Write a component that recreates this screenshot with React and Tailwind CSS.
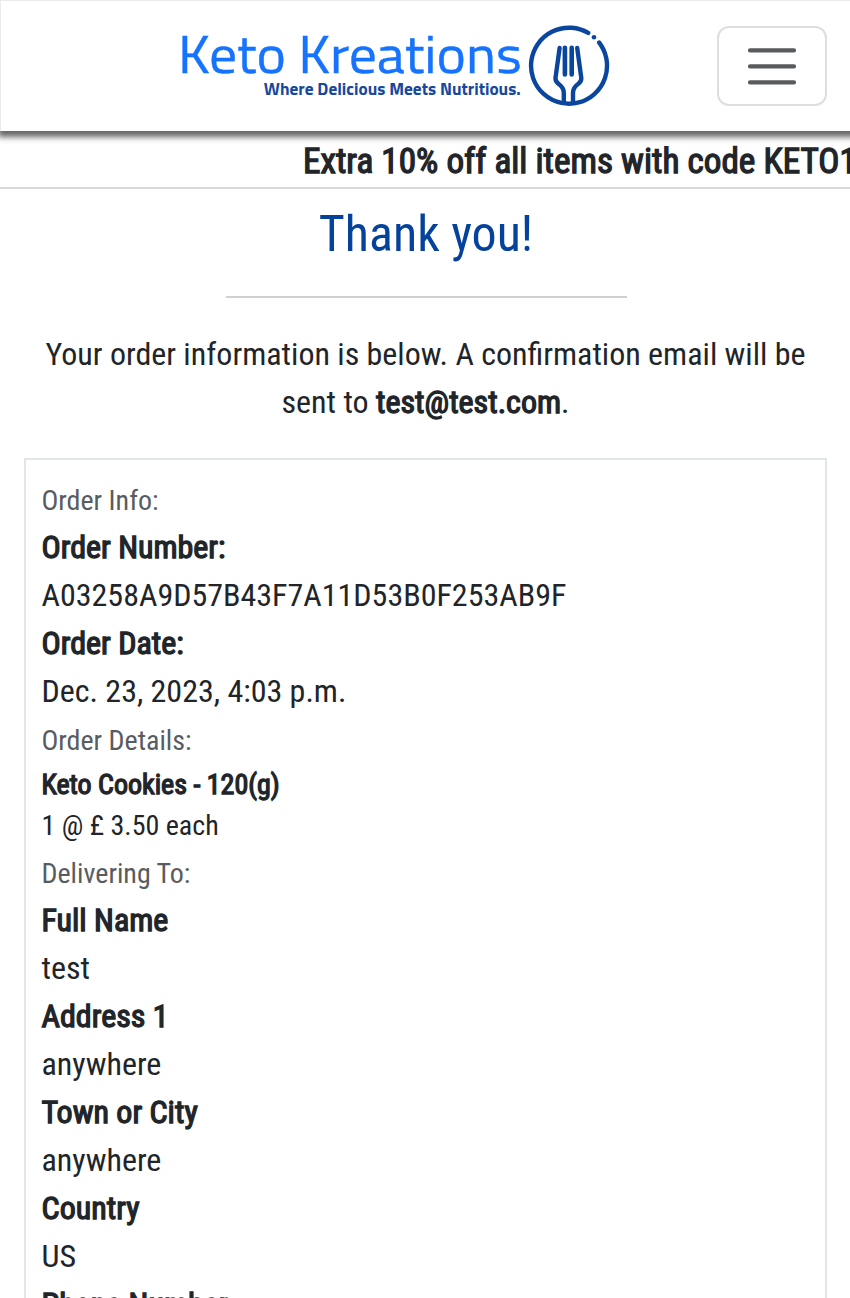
const rows = [
  ['Full Name', 'test'],
  ['Address 1', 'anywhere'],
  ['Town or City', 'anywhere'],
  ['Country', 'US'],
];

function Strong({ children, className = '' }) {
  return <span className={`[-webkit-text-stroke:1.3px_#212529] ${className}`}>{children}</span>;
}

function Label({ children, className }) {
  return <p className={`text-[28px] text-[#595c5f] ${className}`}>{children}</p>;
}

function Logo() {
  return (
    <svg width="430" height="84" viewBox="180 23 430 84" role="img" aria-label="Keto Kreations">
      <g fontFamily="'Titillium Web', 'Exo 2', sans-serif">
        <text x="178" y="72.700" fontSize="52.500" fill="#1573ff" stroke="#1573ff" strokeWidth="0.400" textLength="344" lengthAdjust="spacingAndGlyphs">
          Keto Kreations
        </text>
        <text x="263.800" y="94.500" fontSize="17" fontWeight="700" fill="#17489c" textLength="257" lengthAdjust="spacingAndGlyphs">
          Where Delicious Meets Nutritious.
        </text>
      </g>
      <g fill="none" stroke="#0b469e" strokeLinecap="round" strokeLinejoin="round">
        <path d="M588.200 32.900 A38 38 0 1 0 599.200 42.600" strokeWidth="4.400" />
        <path d="M559.600 48 L555.500 78 Q555.200 81.500 558.700 84 Q563.800 87.500 563.800 93 V102 M577.200 48 L581.300 78 Q581.600 81.500 578.100 84 Q573 87.500 573 93 V102" strokeWidth="4.400" />
        <path d="M564.900 47.700 V74.500 M571.700 47.700 V74.500" strokeWidth="4.600" />
      </g>
      <circle cx="594" cy="37.200" r="2.300" fill="#0b469e" />
    </svg>
  );
}

export default function App() {
  return (
    <div className="h-[1298px] w-full overflow-hidden bg-white font-['Roboto_Condensed','Roboto',sans-serif] text-[32px] leading-[48px] text-[#212529]">
      <header className="relative -mr-2 flex h-[131px] items-start justify-between border-l border-t border-[#ebebeb] bg-white pl-[179px] pr-[31px] shadow-[0_4px_6px_2px_#666]">
        <div className="pt-[22px]">
          <Logo />
        </div>
        <button aria-label="Toggle navigation" className="mt-[25px] flex h-[80px] w-[110px] items-center justify-center rounded-[12px] border-2 border-[#dedede]">
          <svg width="60" height="60" viewBox="0 0 30 30" fill="none" stroke="#595c5f" strokeWidth="2.100" strokeLinecap="round">
            <path d="M4 7.200h22M4 15.200h22M4 23.200h22" />
          </svg>
        </button>
      </header>
      <div className="h-[58px] overflow-hidden whitespace-nowrap border-b-2 border-[#d9d9d9] pl-[303px] pt-[6px] text-[35.2px]">
        <Strong>Extra 10% off all items with code KETO10</Strong>
      </div>
      <main className="pl-6 pr-[23px]">
        <h1 className="pl-px pt-[15px] text-center text-[50px] leading-[60px] text-[#05429b]">Thank you!</h1>
        <hr className="ml-[202px] mt-[32px] w-[401px] border-t-2 border-[#cfd0d1]" />
        <p className="mt-[32px] text-center">
          Your order information is below. A confirmation email will be sent to <Strong>test@test.com</Strong>.
        </p>
        <section className="mt-[32px] h-[860px] border-2 border-[#e2e5e9] px-[15.5px] pt-4">
          <Label className="pt-[3px] leading-[44px]">Order Info:</Label>
          <p><Strong>Order Number:</Strong></p>
          <p>A03258A9D57B43F7A11D53B0F253AB9F</p>
          <p><Strong>Order Date:</Strong></p>
          <p>Dec. 23, 2023, 4:03 p.m.</p>
          <Label className="pt-[3px] leading-[46px]">Order Details:</Label>
          <div className="text-[28px]">
            <p className="leading-[42px]"><Strong>Keto Cookies - 120(g)</Strong></p>
            <p className="pb-[2px] leading-[39px]">1 @ £ 3.50 each</p>
          </div>
          <Label className="pt-[5px] leading-[44px]">Delivering To:</Label>
          {rows.map(([name, value]) => (
            <div key={name}>
              <p><Strong>{name}</Strong></p>
              <p>{value}</p>
            </div>
          ))}
          <p><Strong>Phone Number</Strong></p>
        </section>
      </main>
    </div>
  );
}
